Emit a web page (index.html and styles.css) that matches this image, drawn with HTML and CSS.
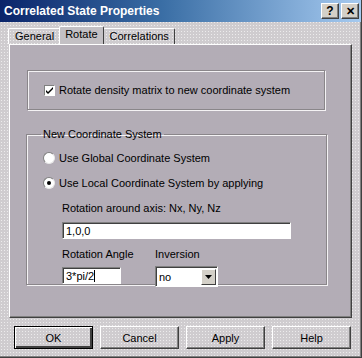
FILE: index.html
```html
<!DOCTYPE html>
<html lang="en">
<head>
    <meta charset="UTF-8">
    <title>Correlated State Properties</title>
    <link rel="stylesheet" href="styles.css">
</head>
<body>
    <div class="dialog">
        <div class="title-bar">
            <span class="title-text">Correlated State Properties</span>
            <div class="title-buttons">
                <span class="title-btn">?</span>
                <span class="title-btn close">&#x2715;</span>
            </div>
        </div>

        <div class="tabs">
            <div class="tab">General</div>
            <div class="tab active">Rotate</div>
            <div class="tab">Correlations</div>
        </div>

        <div class="panel">
            <div class="group group-top">
                <label class="check-row">
                    <span class="checkbox">
                        <svg width="9" height="9" viewBox="0 0 9 9"><path d="M1 4 L3 6 L8 1 L8 3 L3 8 L1 6 Z" fill="#000"/></svg>
                    </span>
                    Rotate density matrix to new coordinate system
                </label>
            </div>

            <fieldset class="group group-coords">
                <legend>New Coordinate System</legend>
                <div class="radio-row">
                    <span class="radio"></span>
                    Use Global Coordinate System
                </div>
                <div class="radio-row">
                    <span class="radio checked"></span>
                    Use Local Coordinate System by applying
                </div>
                <div class="sub-fields">
                    <div class="field-label">Rotation around axis: Nx, Ny, Nz</div>
                    <div class="input wide">1,0,0</div>
                    <div class="field-pair">
                        <div class="field angle">
                            <div class="field-label">Rotation Angle</div>
                            <div class="input small">3*pi/2<span class="caret"></span></div>
                        </div>
                        <div class="field">
                            <div class="field-label">Inversion</div>
                            <div class="select">
                                <span class="select-value">no</span>
                                <span class="select-btn"><svg width="7" height="4" viewBox="0 0 7 4"><path d="M0 0 H7 L3.5 4 Z" fill="#000"/></svg></span>
                            </div>
                        </div>
                    </div>
                </div>
            </fieldset>
        </div>

        <div class="buttons">
            <div class="btn default">OK</div>
            <div class="btn">Cancel</div>
            <div class="btn">Apply</div>
            <div class="btn">Help</div>
        </div>
    </div>
</body>
</html>
```

FILE: styles.css
```css
html, body {
    margin: 0;
    padding: 0;
}

body {
    font-family: "Liberation Sans", Arial, sans-serif;
    font-size: 11px;
    color: #000;
    background: #cbc8cb;
}

.dialog {
    width: 362px;
    height: 358px;
    box-sizing: border-box;
    border-right: 1px solid #404040;
    border-bottom: 1px solid #404040;
    box-shadow: inset -1px -1px #808080;
    background-color: #cfcccf;
    background-image: radial-gradient(circle, rgba(255, 255, 255, 0.6) 0.6px, transparent 0.8px);
    background-size: 3px 3px;
}

.title-bar {
    height: 22px;
    display: flex;
    align-items: center;
    justify-content: space-between;
    padding: 0 2px 0 4px;
    background: linear-gradient(to right, #0a246a 0%, #3a6ea5 45%, #a6caf0 100%);
}

.title-text {
    color: #fff;
    font-weight: bold;
    font-size: 12px;
}

.title-buttons {
    display: flex;
    gap: 2px;
}

.title-btn {
    width: 16px;
    height: 14px;
    background: #d4d0c8;
    border: 1px solid;
    border-color: #fff #404040 #404040 #fff;
    box-shadow: inset -1px -1px #808080;
    font-weight: bold;
    font-size: 12px;
    line-height: 14px;
    text-align: center;
}

.title-btn.close {
    font-size: 11px;
}

.tabs {
    display: flex;
    align-items: flex-end;
    height: 22px;
    padding-left: 8px;
}

.tab {
    height: 15px;
    padding: 0 5px 0 6px;
    border: 1px solid #fff;
    border-right-color: #404040;
    border-bottom: none;
    border-radius: 2px 2px 0 0;
    line-height: 15px;
    color: #000;
}

.tab.active {
    height: 17px;
    margin: 0 -1px;
    padding: 0 5px;
    position: relative;
    z-index: 1;
    background: #c3c0c4;
}

.panel {
    margin: 0 9px 0 9px;
    height: 274px;
    box-sizing: border-box;
    border: 1px solid;
    border-color: #fff #404040 #404040 #fff;
    box-shadow: inset -1px -1px #808080;
    background-color: #c3c0c4;
    background-image: radial-gradient(circle, rgba(120, 100, 130, 0.45) 0.6px, transparent 0.8px);
    background-size: 2px 2px;
    padding: 25px 0 0 17px;
}

.group {
    box-sizing: border-box;
    border: 1px solid #8a868a;
    box-shadow: 1px 1px #f4f2f4, inset 1px 1px #f4f2f4;
}

.group-top {
    width: 298px;
    height: 40px;
    display: flex;
    align-items: center;
    padding-left: 16px;
    margin-bottom: 18px;
}

.check-row {
    display: flex;
    align-items: center;
    gap: 4px;
}

.checkbox {
    width: 9px;
    height: 9px;
    border: 1px solid;
    border-color: #808080 #fff #fff #808080;
    background: #fff;
    display: flex;
}

.group-coords {
    margin: 0 0 0 -1px;
    width: 301px;
    height: 157px;
    padding: 11px 0 0 16px;
}

legend {
    padding: 0 2px;
    margin-left: -2px;
}

.radio-row {
    display: flex;
    align-items: center;
    gap: 4px;
    height: 14px;
    margin-bottom: 11px;
}

.radio {
    width: 10px;
    height: 10px;
    border-radius: 50%;
    background: #fff;
    border: 1px solid;
    border-color: #808080 #e8e8e8 #e8e8e8 #808080;
    position: relative;
}

.radio.checked::after {
    content: "";
    position: absolute;
    left: 3px;
    top: 3px;
    width: 4px;
    height: 4px;
    border-radius: 50%;
    background: #000;
}

.sub-fields {
    padding-left: 19px;
    padding-top: 1px;
}

.field-label {
    height: 14px;
    margin-bottom: 6px;
}

.input {
    box-sizing: border-box;
    height: 17px;
    background: #fff;
    border: 1px solid;
    border-color: #808080 #fff #fff #808080;
    box-shadow: inset 1px 1px #404040;
    padding: 1px 0 0 3px;
    line-height: 14px;
}

.input.wide {
    width: 229px;
    margin-bottom: 9px;
}

.input.small {
    width: 59px;
}

.caret {
    display: inline-block;
    width: 1px;
    height: 12px;
    background: #000;
    vertical-align: -2px;
}

.field-pair {
    display: flex;
}

.field.angle {
    width: 93px;
}

.field.angle .field-label {
    margin-bottom: 5px;
}

.select {
    box-sizing: border-box;
    width: 63px;
    height: 21px;
    margin-top: -2px;
    background: #fff;
    border: 1px solid;
    border-color: #808080 #fff #fff #808080;
    box-shadow: inset 1px 1px #404040;
    display: flex;
    justify-content: space-between;
    padding: 2px 1px 1px 3px;
}

.select-value {
    line-height: 16px;
}

.select-btn {
    width: 15px;
    box-sizing: border-box;
    background: #d4d0c8;
    border: 1px solid;
    border-color: #fff #404040 #404040 #fff;
    display: flex;
    align-items: center;
    justify-content: center;
}

.buttons {
    display: flex;
    gap: 7px;
    padding: 8px 0 0 14px;
}

.btn {
    box-sizing: border-box;
    width: 79px;
    height: 23px;
    border: 1px solid;
    border-color: #fff #404040 #404040 #fff;
    box-shadow: inset -1px -1px #808080;
    display: flex;
    align-items: center;
    justify-content: center;
}

.btn.default {
    border: 1px solid #000;
    box-shadow: inset 1px 1px #fff, inset -2px -2px #404040;
}
```
